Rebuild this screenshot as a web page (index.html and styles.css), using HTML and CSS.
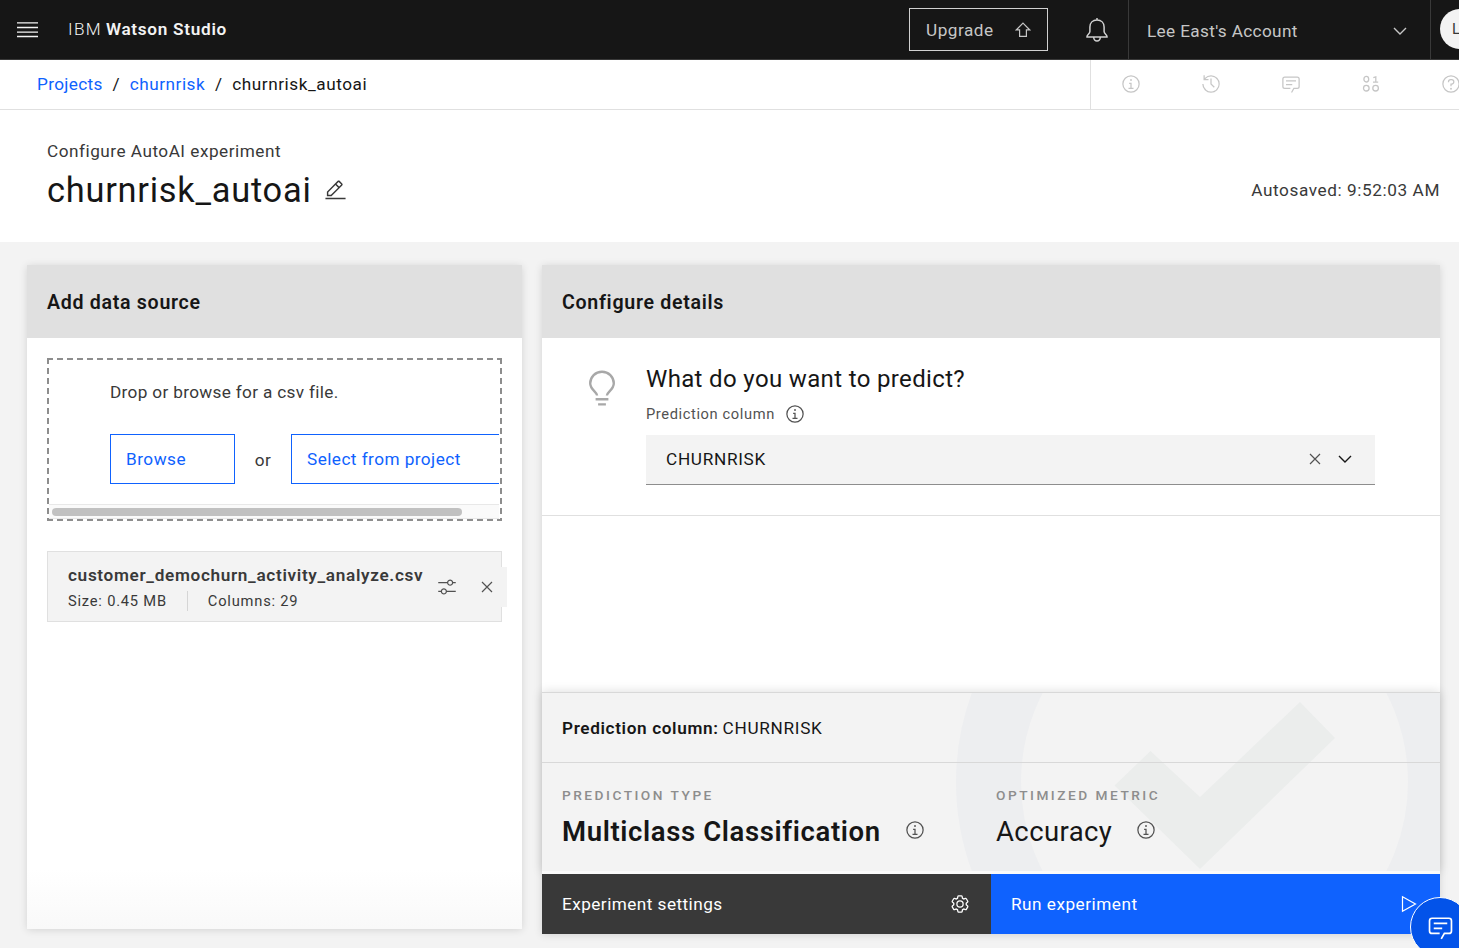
FILE: index.html
```html
<!DOCTYPE html>
<html lang="en">
<head>
<meta charset="utf-8">
<title>churnrisk_autoai - IBM Watson Studio</title>
<link rel="stylesheet" href="styles.css">
</head>
<body>
<svg class="sprite" width="0" height="0" aria-hidden="true">
  <symbol id="info" viewBox="0 0 32 32"><path d="M17 22V14H13V16H15V22H12V24H20V22Z"/><circle cx="16" cy="9.5" r="1.5"/><circle cx="16" cy="16" r="13" fill="none" stroke="currentColor" stroke-width="2"/></symbol>
  <symbol id="chat" viewBox="0 0 32 32"><path d="M17.74 30 16 29l4-7h6a2 2 0 0 0 2-2V8a2 2 0 0 0-2-2H6A2 2 0 0 0 4 8V20a2 2 0 0 0 2 2h9v2H6a4 4 0 0 1-4-4V8A4 4 0 0 1 6 4H26a4 4 0 0 1 4 4V20a4 4 0 0 1-4 4H21.16Z"/><path d="M8 10H24V12H8zM8 16H18V18H8z"/></symbol>
  <symbol id="close" viewBox="0 0 12 12"><path d="M1 1 11 11M11 1 1 11" fill="none" stroke="currentColor" stroke-width="1.2"/></symbol>
  <symbol id="chevron" viewBox="0 0 14 8"><path d="M1 1 7 7 13 1" fill="none" stroke="currentColor" stroke-width="1.4"/></symbol>
</svg>

<header class="topbar">
  <button class="menu" aria-label="Menu"><svg width="21" height="16" viewBox="0 0 21 16"><path d="M0 .9H21M0 5.5H21M0 10.100H21M0 14.500H21" fill="none" stroke="currentColor" stroke-width="1.400"/></svg></button>
  <div class="brand"><span class="brand-ibm">IBM</span><b>Watson Studio</b></div>
  <div class="topbar-right">
    <button class="upgrade"><span>Upgrade</span><svg width="16" height="16" viewBox="0 0 16 16"><path d="M8 1.2 14.6 7.8H11.4V14.4H4.6V7.8H1.4Z" fill="none" stroke="currentColor" stroke-width="1.2"/></svg></button>
    <svg class="bell" width="24" height="28" viewBox="0 0 24 28" fill="none" stroke="currentColor" stroke-width="1.5"><path d="M12 2v2M12 4c-4.3 0-7.1 3-7.1 7v4.6c0 2.1-2.9 3-2.9 4.9v.6h20v-.6c0-1.9-2.9-2.8-2.9-4.9V11c0-4-2.8-7-7.1-7zM8.7 21.3a3.3 3.7 0 0 0 6.6 0"/></svg>
    <div class="account"><span>Lee East's Account</span><svg width="14" height="8"><use href="#chevron"/></svg></div>
    <div class="avatar">LE</div>
  </div>
</header>

<nav class="crumbbar">
  <div class="crumbs"><a class="c1">Projects</a><span class="slash">/</span><a class="c2">churnrisk</a><span class="slash">/</span><span class="c3">churnrisk_autoai</span></div>
  <div class="tools">
    <div><svg class="i20"><use href="#info"/></svg></div>
    <div><svg class="i20" viewBox="0 0 32 32"><path d="M20.59 22 15 16.41V7H17V15.58L22 20.59Z"/><path d="M16 2A13.94 13.94 0 0 0 6 6.23V2H4v8h8V8H7.08A12 12 0 1 1 4 16H2A14 14 0 1 0 16 2Z"/></svg></div>
    <div><svg class="i20"><use href="#chat"/></svg></div>
    <div><svg class="i20" viewBox="0 0 20 20" fill="none" stroke="currentColor" stroke-width="1.3"><ellipse cx="5.3" cy="5.2" rx="2.4" ry="2.8"/><circle cx="5.3" cy="14.2" r="2.8"/><circle cx="14.6" cy="14.2" r="2.8"/><path d="M12.3 3.6 14.8 2.9V8M12 8.2h5.2"/></svg></div>
    <div><svg class="i20" viewBox="0 0 32 32"><circle cx="16" cy="16" r="13" fill="none" stroke="currentColor" stroke-width="2"/><circle cx="16" cy="23.5" r="1.5"/><path d="M17 8H15.5A4.49 4.49 0 0 0 11 12.5V13h2v-.5A2.5 2.5 0 0 1 15.5 10H17a2.5 2.5 0 0 1 0 5H15v4.5h2V17a4.5 4.5 0 0 0 0-9Z"/></svg></div>
  </div>
</nav>

<section class="titlebar">
  <div>
    <p class="eyebrow">Configure AutoAI experiment</p>
    <div class="title-row"><h1>churnrisk_autoai</h1>
      <svg width="23" height="23" viewBox="0 0 32 32"><path d="M2 26H30V28H2zM25.4 9c.8-.8.8-2 0-2.8l-3.6-3.6c-.8-.8-2-.8-2.8 0l-15 15V24h6.4L25.4 9zM20.4 4 24 7.6l-3 3L17.4 7l3-3zM6 22v-3.6l10-10 3.6 3.6-10 10H6z"/></svg>
    </div>
  </div>
  <p class="autosaved">Autosaved: 9:52:03 AM</p>
</section>

<main class="workspace">
  <section class="card source">
    <h2 class="h-add">Add data source</h2>
    <div class="source-body">
      <div class="drop">
        <div class="drop-view">
          <p class="drop-text">Drop or browse for a csv file.</p>
          <div class="drop-actions"><button class="browse">Browse</button><span class="or">or</span><button class="select">Select from project</button></div>
        </div>
        <div class="scroll"><div class="thumb"></div></div>
      </div>
      <div class="file">
        <div class="file-info">
          <b>customer_demochurn_activity_analyze.csv</b>
          <div class="meta"><span>Size: 0.45 MB</span><span>Columns: 29</span></div>
        </div>
        <svg class="i20 adjust" viewBox="0 0 32 32"><path d="M30 8h-4.1c-.5-2.3-2.5-4-4.9-4s-4.4 1.7-4.9 4H2v2h14.1c.5 2.3 2.5 4 4.9 4s4.4-1.7 4.9-4H30V8zM21 12c-1.7 0-3-1.3-3-3s1.3-3 3-3 3 1.3 3 3S22.7 12 21 12zM2 24h4.1c.5 2.3 2.5 4 4.9 4s4.4-1.7 4.9-4H30v-2H15.9c-.5-2.3-2.5-4-4.9-4s-4.4 1.7-4.9 4H2V24zM11 20c1.7 0 3 1.3 3 3s-1.3 3-3 3-3-1.3-3-3S9.3 20 11 20z"/></svg>
        <button class="remove" aria-label="Remove"><svg width="12" height="12"><use href="#close"/></svg></button>
      </div>
    </div>
  </section>

  <section class="card details">
    <h2 class="h-conf">Configure details</h2>
    <div class="predict">
      <svg class="bulb" width="28" height="38" viewBox="0 0 28 38" fill="none" stroke="currentColor" stroke-width="2.4"><path d="M9.1 25.5C9.1 22 2.2 20 2.2 13.3a11.8 11.6 0 0 1 23.6 0C25.8 20 18.9 22 18.9 25.500M7.6 29.3h12.8M10.1 34.4h7.8"/></svg>
      <div class="predict-main">
        <h3>What do you want to predict?</h3>
        <div class="label"><span>Prediction column</span><svg class="i20"><use href="#info"/></svg></div>
        <div class="combo"><span>CHURNRISK</span><svg class="clear" width="12" height="12"><use href="#close"/></svg><svg width="14" height="8"><use href="#chevron"/></svg></div>
      </div>
    </div>
    <div class="blank"></div>
    <div class="summary">
      <svg class="watermark" width="484" height="178" viewBox="956 693 484 178" aria-hidden="true"><circle cx="1214.5" cy="782" r="226" fill="none" stroke="#edeef0" stroke-width="65"/><path d="M1300 702 1335 738 1200 869 1114.500 785.500 1150.500 751 1200 797Z" fill="#ebedec"/></svg>
      <div class="sum-col"><b>Prediction column:</b><span>CHURNRISK</span></div>
      <div class="sum-grid">
        <div><h4>PREDICTION TYPE</h4><div class="value"><strong>Multiclass Classification</strong><svg class="i20"><use href="#info"/></svg></div></div>
        <div><h4>OPTIMIZED METRIC</h4><div class="value"><span>Accuracy</span><svg class="i20"><use href="#info"/></svg></div></div>
      </div>
    </div>
    <div class="actions">
      <button class="settings"><span>Experiment settings</span><svg class="i20" viewBox="0 0 32 32"><path d="M27 16.76V15.230l1.92-1.68A2 2 0 0 0 29.3 11L26.94 7a2 2 0 0 0-1.73-1 2 2 0 0 0-.64.1l-2.43.82a11.35 11.35 0 0 0-1.31-.75l-.51-2.52a2 2 0 0 0-2-1.61H13.640a2 2 0 0 0-2 1.61l-.51 2.52a11.48 11.48 0 0 0-1.32.75L7.430 6.060A2 2 0 0 0 6.790 6 2 2 0 0 0 5.060 7L2.700 11a2 2 0 0 0 .41 2.51L5 15.240V16.770L3.110 18.450A2 2 0 0 0 2.700 21L5.060 25a2 2 0 0 0 1.730 1 2 2 0 0 0 .64-.1l2.430-.82a11.350 11.350 0 0 0 1.310.75l.51 2.520a2 2 0 0 0 2 1.610h4.720a2 2 0 0 0 2-1.610l.51-2.520a11.480 11.480 0 0 0 1.320-.75l2.420.82a2 2 0 0 0 .64.1 2 2 0 0 0 1.730-1L29.300 21a2 2 0 0 0-.41-2.510ZM25.210 24l-3.430-1.160a8.860 8.860 0 0 1-2.710 1.570L18.360 28H13.640l-.71-3.550a9.360 9.360 0 0 1-2.700-1.570L6.790 24 4.430 20l2.720-2.400a8.900 8.900 0 0 1 0-3.130L4.430 12 6.790 8l3.430 1.160a8.860 8.860 0 0 1 2.710-1.570L13.640 4h4.720l.71 3.550a9.360 9.360 0 0 1 2.700 1.570L25.210 8 27.570 12l-2.720 2.400a8.900 8.900 0 0 1 0 3.130L27.570 20Z"/><circle cx="16" cy="16" r="5" fill="none" stroke="currentColor" stroke-width="2"/></svg></button>
      <button class="run"><span>Run experiment</span><svg width="16" height="18" viewBox="0 0 16 18"><path d="M1.500 1.700 14.500 9 1.500 16.300Z" fill="none" stroke="currentColor" stroke-width="1.200"/></svg></button>
    </div>
  </section>
</main>
<button class="fab" aria-label="Chat"><svg width="27" height="27"><use href="#chat"/></svg></button>
</body>
</html>
```
FILE: styles.css
```css
* { box-sizing: border-box; }
html, body { margin: 0; height: 948px; overflow: hidden; }
body { display: flex; flex-direction: column; position: relative; background: #f3f3f3; color: #161616; font: 17.2px/24px Roboto, "Liberation Sans", sans-serif; letter-spacing: .5px; white-space: nowrap; }
h1, h2, h3, h4, p { margin: 0; font-weight: 400; }
button { font: inherit; letter-spacing: inherit; color: inherit; background: none; border: 0; padding: 0; margin: 0; text-align: left; }
svg { display: block; flex: none; fill: currentColor; }
svg[fill="none"] { fill: none; }
.sprite { position: absolute; }
.i20 { width: 20px; height: 20px; }

.topbar { display: flex; height: 60px; flex: none; background: #161616; border-bottom: 1px solid #393939; color: #c6c6c6; align-items: flex-start; }
.menu { width: 21px; margin: 22px 0 0 17px; color: #f3f3f3; }
.brand { margin: 17px 0 0 30px; color: #f3f3f3; flex: 1; display: flex; gap: 4px; }
.brand-ibm { font-weight: 300; letter-spacing: 1.3px; }
.brand b { font-weight: 600; letter-spacing: .7px; }
.topbar-right { width: 550px; flex: none; display: flex; height: 59px; }
.upgrade { width: 139px; height: 43px; flex: none; margin-top: 8px; border: 1px solid #d0d0d0; display: flex; align-items: center; justify-content: space-between; padding: 0 16px; }
.bell { margin: 16px 19px 0 37px; color: #d0d0d0; }
.account { width: 303px; flex: none; border: solid #393939; border-width: 0 1px; display: flex; justify-content: space-between; align-items: center; padding: 3px 23px 0 18px; letter-spacing: .35px; }
.avatar { width: 40px; height: 40px; flex: none; margin: 9px 0 0 9px; border-radius: 50%; background: #f3f3f3; color: #393939; font-size: 15px; line-height: 41px; padding-left: 12px; }

.crumbbar { height: 50px; flex: none; background: #fff; border-bottom: 1px solid #e0e0e0; display: flex; }
.crumbs { flex: 1; display: flex; align-items: center; padding: 0 0 1px 37px; }
.crumbs a { color: #0f62fe; }
.c1 { letter-spacing: .35px; }
.c3 { letter-spacing: .55px; }
.slash { width: 27px; text-align: center; }
.tools { width: 369px; flex: none; display: flex; border-left: 1px solid #e0e0e0; color: #c6c6c6; }
.tools div { width: 80px; flex: none; display: grid; place-items: center; padding-bottom: 1px; }

.titlebar { height: 132px; flex: none; background: #fff; display: flex; justify-content: space-between; padding: 29px 19px 0 47px; color: #393939; }
.title-row { display: flex; align-items: center; gap: 12px; height: 54px; }
h1 { font-size: 34.400px; letter-spacing: .75px; color: #161616; }
.title-row svg { margin-top: 1px; }
.autosaved { padding-top: 39px; letter-spacing: .58px; }

.workspace { flex: 1; display: flex; gap: 20px; padding: 23px 19px 0 27px; align-items: flex-start; }
.card { background: #fff; box-shadow: 0 1px 8px rgba(0,0,0,.13); display: flex; flex-direction: column; }
.source { width: 495px; height: 664px; background: linear-gradient(#fff 91%, #f9f9f9); }
.details { width: 898px; height: 669px; }
h2 { height: 73px; flex: none; background: #e0e0e0; padding-left: 20px; font-size: 19.600px; font-weight: 600; line-height: 75px; letter-spacing: .7px; }
.source-body { padding: 20px; }
.drop { height: 163px; background: repeating-linear-gradient(90deg, #8d8d8d 0 6px, transparent 6px 10px) 0 0/100% 2px no-repeat, repeating-linear-gradient(90deg, #8d8d8d 0 6px, transparent 6px 10px) 0 100%/100% 2px no-repeat, repeating-linear-gradient(#8d8d8d 0 6px, transparent 6px 10px) 0 0/2px 100% no-repeat, repeating-linear-gradient(#8d8d8d 0 6px, transparent 6px 10px) 100% 0/2px 100% no-repeat; padding: 2px 3px 2px 2px; color: #393939; }
.drop-view { height: 144px; padding: 20px 0 0 61px; overflow: hidden; }
.drop-text { letter-spacing: .33px; }
.drop-actions { display: flex; margin-top: 30px; align-items: center; }
.drop-actions button { height: 50px; flex: none; border: 1px solid #0f62fe; color: #0f62fe; padding-left: 15px; }
.browse { width: 125px; }
.or { width: 56px; flex: none; text-align: center; padding-top: 2px; }
.drop-actions .select { width: 230px; letter-spacing: .45px; }
.scroll { height: 15px; background: #fafafa; border: solid #e8e8e8; border-width: 1px 0; padding: 3px; }
.thumb { width: 410px; height: 8px; border-radius: 4px; background: #c1c1c1; }
.file { height: 71px; margin-top: 30px; background: #f3f3f3; border: 1px solid #e0e0e0; display: flex; align-items: center; color: #393939; padding-left: 20px; }
.file-info { width: 369px; flex: none; }
.file-info b { display: block; font-weight: 600; letter-spacing: .66px; line-height: 26px; }
.meta { display: flex; font-size: 14.700px; letter-spacing: .78px; line-height: 20px; margin-top: 3px; }
.meta span + span { margin-left: 20px; padding-left: 20px; border-left: 1px solid #d5d5d5; }
.file .i20, .remove { color: #525252; }
.remove { width: 40px; height: 40px; flex: none; margin-left: 10px; background: #f3f3f3; display: grid; place-items: center; }

.predict { height: 178px; flex: none; border-bottom: 1px solid #e0e0e0; display: flex; padding: 27px 65px 0 46px; }
.bulb { color: #a8a8a8; margin-top: 5px; }
.predict-main { flex: 1; margin-left: 30px; }
h3 { font-size: 24px; line-height: 28px; letter-spacing: .35px; }
.label { height: 26px; margin-top: 8px; display: flex; align-items: center; gap: 10px; font-size: 14.700px; letter-spacing: .6px; color: #525252; }
.combo { height: 50px; margin-top: 8px; background: #f3f3f3; border-bottom: 1px solid #8d8d8d; display: flex; align-items: center; padding: 0 23px 1px 20px; letter-spacing: .7px; }
.clear { margin: 0 17px 0 auto; color: #525252; }
.blank { flex: 1; }
.summary { position: relative; height: 179px; flex: none; background: #f3f3f3; border-top: 1px solid #d8d8d8; box-shadow: 0 0 10px rgba(0,0,0,.15); }
.watermark { position: absolute; right: 0; top: 0; }
.sum-col { position: relative; height: 70px; border-bottom: 1px solid #d8d8d8; display: flex; align-items: center; gap: 4px; padding-left: 20px; }
.sum-col b { font-weight: 600; letter-spacing: .63px; }
.sum-col span { letter-spacing: .7px; }
.sum-grid { position: relative; display: grid; grid-template-columns: 434px 1fr; padding: 22px 0 0 20px; }
h4 { font-size: 13.700px; line-height: 20px; font-weight: 500; letter-spacing: 2.500px; color: #8d8d8d; }
.value { display: flex; align-items: center; gap: 24px; font-size: 27.500px; line-height: 36px; margin-top: 9px; letter-spacing: .4px; }
.value strong { font-weight: 600; letter-spacing: .63px; }
.value svg { color: #525252; margin-top: -4px; }
.actions { position: relative; display: flex; height: 63px; flex: none; border-top: 3px solid #fafafa; color: #fff; }
.actions button { width: 50%; display: flex; justify-content: space-between; align-items: center; padding: 0 21px 0 20px; }
.actions .settings { background: #393939; letter-spacing: .45px; }
.actions .run { background: #0f62fe; padding-right: 23px; }
.fab { position: absolute; left: 1410px; top: 897px; width: 60px; height: 60px; border: 1px solid #fff; border-radius: 50%; background: #0353e9; color: #fff; display: grid; place-items: center; }
```
